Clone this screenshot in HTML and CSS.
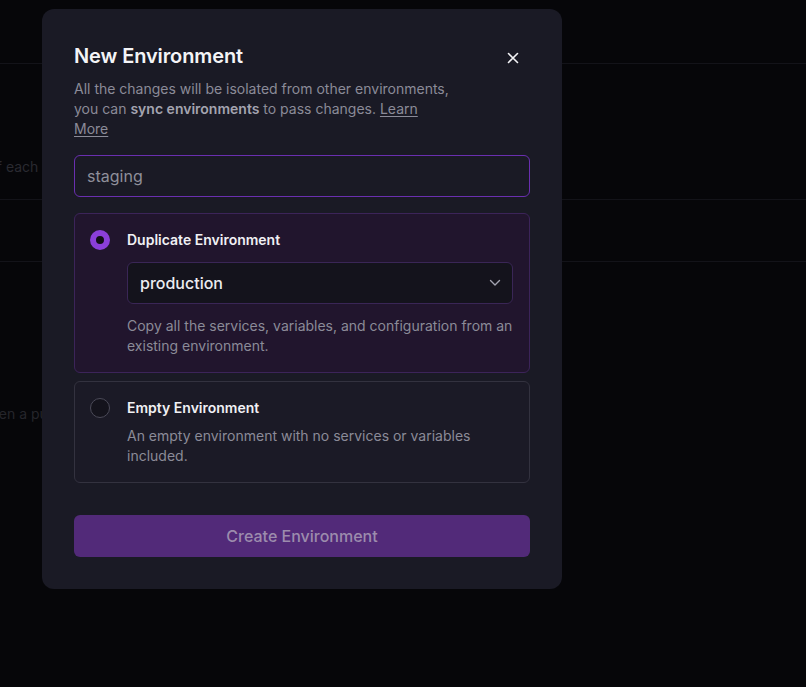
FILE: index.html
```html
<!DOCTYPE html>
<html lang="en">
<head>
<meta charset="utf-8">
<title>New Environment</title>
<link rel="stylesheet" href="styles.css">
</head>
<body>
<div class="page">
  <header class="topbar"></header>
  <main class="content">
    <div class="row row-text"><span>Set the configuration of each</span></div>
    <div class="row row-empty"></div>
    <div class="row row-text2"><span>Create a PR environment when a pull</span></div>
  </main>
</div>

<div class="overlay">
  <div class="modal" role="dialog" aria-labelledby="modal-title">
    <div class="modal-head">
      <h2 id="modal-title" class="modal-title">New Environment</h2>
      <button class="close-btn" aria-label="Close">
        <svg width="12" height="12" viewBox="0 0 12 12"><path d="M1.5 1.5 L10.5 10.5 M10.5 1.5 L1.5 10.5" stroke="#f2f2f5" stroke-width="1.6" stroke-linecap="round"/></svg>
      </button>
    </div>
    <p class="modal-desc">All the changes will be isolated from other environments, you can <strong>sync environments</strong> to pass changes. <a href="#" class="link">Learn More</a></p>

    <div class="name-input">staging</div>

    <div class="option option-active">
      <span class="radio radio-on"></span>
      <div class="option-body">
        <div class="option-label">Duplicate Environment</div>
        <div class="select">
          <span>production</span>
          <svg width="12" height="8" viewBox="0 0 12 8"><path d="M1.5 1.5 L6 6 L10.5 1.5" fill="none" stroke="#a3a3b0" stroke-width="1.4" stroke-linecap="round" stroke-linejoin="round"/></svg>
        </div>
        <p class="option-desc">Copy all the services, variables, and configuration from an existing environment.</p>
      </div>
    </div>

    <div class="option option-plain">
      <span class="radio"></span>
      <div class="option-body">
        <div class="option-label">Empty Environment</div>
        <p class="option-desc tight">An empty environment with no services or variables included.</p>
      </div>
    </div>

    <button class="create-btn">Create Environment</button>
  </div>
</div>
</body>
</html>
```
FILE: styles.css
```css
* { box-sizing: border-box; }
html, body { margin: 0; padding: 0; }
body {
  background: #060609;
  font-family: Inter, "Noto Sans", "Liberation Sans", sans-serif;
  width: 806px;
  height: 687px;
  overflow: hidden;
}
.page { width: 806px; height: 687px; overflow: hidden; }
.topbar {
  height: 64px;
  border-bottom: 1px solid #131319;
}
.content {
  margin-left: -154px;
}
.row { border-bottom: 1px solid #131319; }
.row-text {
  height: 136px;
  padding-top: 94px;
  font-size: 14px;
  color: #2a2a31;
}
.row-empty { height: 62px; }
.row-text2 {
  border-bottom: none;
  padding-top: 143px;
  font-size: 14px;
  color: #25252b;
  margin-left: -35px;
}

.overlay {
  position: fixed;
  inset: 0;
}
.modal {
  position: absolute;
  left: 42px;
  top: 9px;
  width: 520px;
  background: #1a1a25;
  border-radius: 12px;
  padding: 32px;
  display: flex;
  flex-direction: column;
}
.modal-head {
  display: flex;
  align-items: center;
  justify-content: space-between;
  height: 28px;
  margin-top: 1px;
}
.modal-title {
  margin: 0;
  font-size: 20px;
  line-height: 28px;
  font-weight: 600;
  color: #f4f4f7;
  letter-spacing: -0.1px;
}
.close-btn {
  background: none;
  border: none;
  padding: 0;
  width: 24px;
  height: 24px;
  display: flex;
  align-items: center;
  justify-content: center;
  margin-right: 5px;
  margin-top: 4px;
  cursor: pointer;
}
.modal-desc {
  margin: 9px 0 0;
  max-width: 380px;
  font-size: 14px;
  line-height: 20px;
  color: #8b8b98;
}
.modal-desc strong { color: #a4a4b0; font-weight: 600; }
.link { color: #8b8b98; text-decoration: underline; text-underline-offset: 2px; }

.name-input {
  margin-top: 16px;
  height: 42px;
  border: 1px solid #6a2fb0;
  border-radius: 6px;
  padding: 0 12px;
  display: flex;
  align-items: center;
  font-size: 16px;
  color: #8f8f9b;
  background: #1a1a25;
}

.option {
  display: flex;
  gap: 17px;
  border-radius: 6px;
  padding: 16px 16px 16px 15px;
}
.option-active {
  margin-top: 16px;
  background: #21152d;
  border: 1px solid #3c2459;
}
.option-plain {
  margin-top: 8px;
  background: #1b1a26;
  border: 1px solid #33323f;
}
.radio {
  flex: none;
  width: 20px;
  height: 20px;
  border-radius: 50%;
  border: 1px solid #4b4a58;
  background: #14131c;
}
.radio-on {
  border: 6px solid #8b3fd9;
  background: #120f18;
}
.option-body { flex: 1; display: flex; flex-direction: column; }
.option-label {
  font-size: 14px;
  line-height: 20px;
  font-weight: 600;
  color: #f0f0f4;
}
.select {
  margin-top: 12px;
  height: 42px;
  border: 1px solid #3a2656;
  border-radius: 6px;
  background: #14131c;
  padding: 0 11px 0 12px;
  display: flex;
  align-items: center;
  justify-content: space-between;
  font-size: 16px;
  font-weight: 500;
  color: #ececf1;
}
.option-desc {
  margin: 12px 0 0;
  font-size: 14px;
  line-height: 20px;
  color: #8b8b98;
}
.option-desc.tight { margin-top: 8px; }

.create-btn {
  margin-top: 32px;
  height: 42px;
  border: none;
  border-radius: 6px;
  background: #522a79;
  color: #9c8cad;
  font-family: inherit;
  font-size: 16px;
  font-weight: 500;
  cursor: pointer;
}
```
